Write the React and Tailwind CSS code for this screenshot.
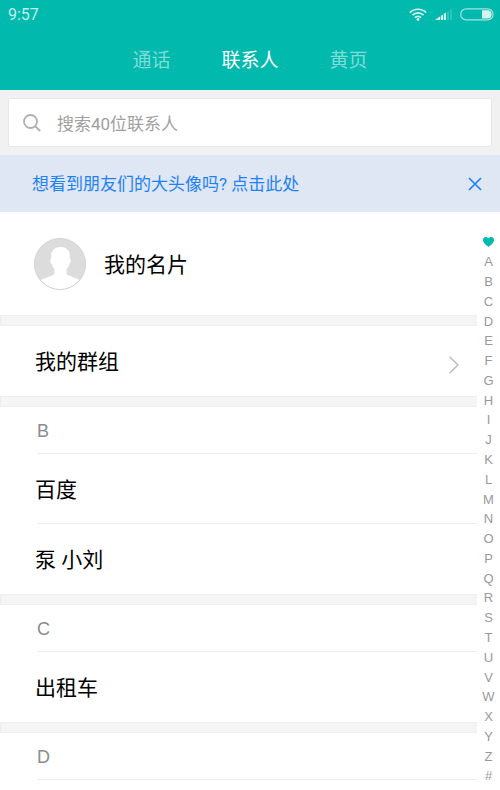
import React, { useState } from 'react'

const TABS = ['通话', '联系人', '黄页']

const SECTIONS = [
  { letter: 'B', contacts: ['百度', '泵 小刘'] },
  { letter: 'C', contacts: ['出租车'] },
  { letter: 'D', contacts: [] },
]

const LETTERS = [...'ABCDEFGHIJKLMNOPQRSTUVWXYZ#']

function WifiIcon() {
  return (
    <svg width="18" height="13" viewBox="0 0 18 13" fill="none" stroke="#d5f3f0" strokeWidth="1.7">
      <path d="M0.8 4.6C5.3 0.1 12.7 0.1 17.2 4.6" />
      <path d="M3.4 7.2C6.5 4.1 11.5 4.1 14.6 7.2" />
      <path d="M6 9.7C7.6 8 10.4 8 12 9.7" />
      <circle cx="9" cy="11.4" r="1.4" fill="#d5f3f0" stroke="none" />
    </svg>
  )
}

function SignalIcon() {
  return (
    <svg width="17" height="12" viewBox="0 0 17 12" fill="#d5f3f0">
      <path d="M0 12L2.5 10V12Z" />
      <path d="M2.5 10L5 8.4V12H2.5Z" />
      <path d="M5.8 7.8L8 6.4V12H5.8Z" />
      <path d="M8.8 5.8L11 4.4V12H8.8Z" />
      <path d="M12 3.8L14 2.4V12H12Z" fillOpacity="0.2" />
      <path d="M15 1.8L17 0.4V12H15Z" fillOpacity="0.2" />
    </svg>
  )
}

function BatteryIcon() {
  return (
    <svg width="34" height="13" viewBox="0 0 34 13">
      <rect x="0.7" y="0.9" width="32.4" height="11" rx="5.5" fill="none" stroke="#9fe3dd" strokeWidth="1.2" />
      <path d="M22 2.3H27.5A4.1 4.1 0 0 1 27.5 10.5H22Z" fill="#d5f3f0" />
    </svg>
  )
}

function SearchIcon() {
  return (
    <svg width="18" height="18" viewBox="0 0 18 18" fill="none" stroke="#b0b0b0" strokeWidth="1.8">
      <circle cx="7.5" cy="7.5" r="6.5" />
      <path d="M12 12L17.2 17.2" />
    </svg>
  )
}

function CloseIcon() {
  return (
    <svg width="14" height="14" viewBox="0 0 14 14" fill="none" stroke="#1e82f5" strokeWidth="1.7">
      <path d="M1 1L13 13M13 1L1 13" />
    </svg>
  )
}

function ChevronIcon() {
  return (
    <svg width="10" height="18" viewBox="0 0 10 18" fill="none" stroke="#b8b8b8" strokeWidth="1.3">
      <path d="M0.6 0.8L9 9L0.6 17.2" />
    </svg>
  )
}

function HeartIcon() {
  return (
    <svg width="11" height="10" viewBox="0 0 11 10" fill="#02b9ae">
      <path d="M5.5 10C4.3 9 0 6.4 0 3.1C0 1.3 1.3 0 2.9 0C4 0 5 0.6 5.5 1.5C6 0.6 7 0 8.1 0C9.7 0 11 1.3 11 3.1C11 6.4 6.7 9 5.5 10Z" />
    </svg>
  )
}

function Avatar() {
  return (
    <svg width="52" height="52" viewBox="0 0 52 52">
      <defs>
        <clipPath id="avatar-clip">
          <circle cx="26" cy="26" r="25" />
        </clipPath>
      </defs>
      <circle cx="26" cy="26" r="25.5" fill="#dcdcdc" stroke="#d2d2d2" />
      <path
        clipPath="url(#avatar-clip)"
        fill="#fff"
        d="M26.5 9C31.8 9 35.8 12.2 35.8 17.2V20.2C37.2 20.6 37 25.4 35.2 26.2C34.8 28.2 33.8 29.8 32.6 30.8V35C32.6 36.2 33.4 36.8 34.6 37.3L46.5 42.2V52H6V42.2L18.4 37.3C19.6 36.8 20.4 36.2 20.4 35V30.8C19.2 29.8 18.2 28.2 17.8 26.2C16 25.4 15.8 20.6 17.2 20.2V17.2C17.2 12.2 21.2 9 26.5 9Z"
      />
    </svg>
  )
}

function Divider() {
  return <div className="h-[11px] border border-r-0 border-[#eeeeee] bg-[#f5f5f5]" />
}

function Section({ letter, contacts }) {
  return (
    <section>
      <Divider />
      <h2 className="ml-[37px] flex h-[47px] items-center border-b border-[#ededed] pt-[2px] font-[Liberation_Sans,sans-serif] text-[18px] text-[#8c8c8c]">
        {letter}
      </h2>
      <ul className="divide-y divide-[#ededed] pl-[37px]">
        {contacts.map(name => (
          <li key={name} className="flex h-[70px] items-center pt-1">
            <button className="-ml-[2px] text-[21px]">{name}</button>
          </li>
        ))}
      </ul>
    </section>
  )
}

export default function App() {
  const [activeTab, setActiveTab] = useState('联系人')
  const [showTip, setShowTip] = useState(true)

  return (
    <div className="flex min-h-screen flex-col bg-white font-[Roboto,'Noto_Sans_CJK_SC',sans-serif] text-black">
      <header className="bg-[#02b9ae] pb-3">
        <div className="flex h-[28px] items-center justify-between pl-2 pr-[6px]">
          <span className="pt-[2px] text-[16px] text-[#c4efeb]">9:57</span>
          <div className="flex items-center gap-2">
            <WifiIcon />
            <SignalIcon />
            <BatteryIcon />
          </div>
        </div>
        <nav className="flex h-[50px] items-center justify-center gap-[51px] pt-4">
          {TABS.map(tab => (
            <button
              key={tab}
              onClick={() => setActiveTab(tab)}
              className={tab === activeTab ? 'text-[19px] text-white' : 'text-[19px] text-[#80dcd6]'}
            >
              {tab}
            </button>
          ))}
        </nav>
      </header>

      <div className="bg-[#f1f1f1] p-2">
        <label className="flex h-[49px] items-center gap-4 rounded-xs border border-[#e8e8e8] bg-white px-[14px]">
          <SearchIcon />
          <input
            type="text"
            aria-label="搜索联系人"
            placeholder="搜索40位联系人"
            className="min-w-0 flex-1 pt-1 text-[17px] outline-none placeholder:text-[#a0a0a0]"
          />
        </label>
      </div>

      {showTip && (
        <div className="flex h-[57px] items-center justify-between bg-[#dfe6f4] pl-8 pr-[18px]">
          <a href="#avatars" className="pt-[2px] text-[17px] text-[#1e82f5]">想看到朋友们的大头像吗? 点击此处</a>
          <button aria-label="关闭" onClick={() => setShowTip(false)}>
            <CloseIcon />
          </button>
        </div>
      )}

      <div className="flex flex-1">
        <main className="min-w-0 flex-1">
          <button className="flex h-[103px] w-full items-center gap-[18px] pl-[34px] text-[21px]">
            <Avatar />
            <span className="pt-1">我的名片</span>
          </button>
          <Divider />
          <button className="flex h-[70px] w-full items-center justify-between pl-[35px] pr-[18px] pt-1 text-[21px]">
            我的群组
            <span className="pt-1">
              <ChevronIcon />
            </span>
          </button>
          {SECTIONS.map(section => (
            <Section key={section.letter} letter={section.letter} contacts={section.contacts} />
          ))}
        </main>

        <nav className="flex w-[23px] flex-col pb-1 pt-5 font-[Liberation_Sans,sans-serif] text-[13px] leading-none text-[#999999]">
          <a href="#favorites" aria-label="收藏" className="flex flex-1 items-center justify-center">
            <HeartIcon />
          </a>
          {LETTERS.map(letter => (
            <a key={letter} href={`#${letter}`} className="flex flex-1 items-center justify-center">
              {letter}
            </a>
          ))}
        </nav>
      </div>
    </div>
  )
}
